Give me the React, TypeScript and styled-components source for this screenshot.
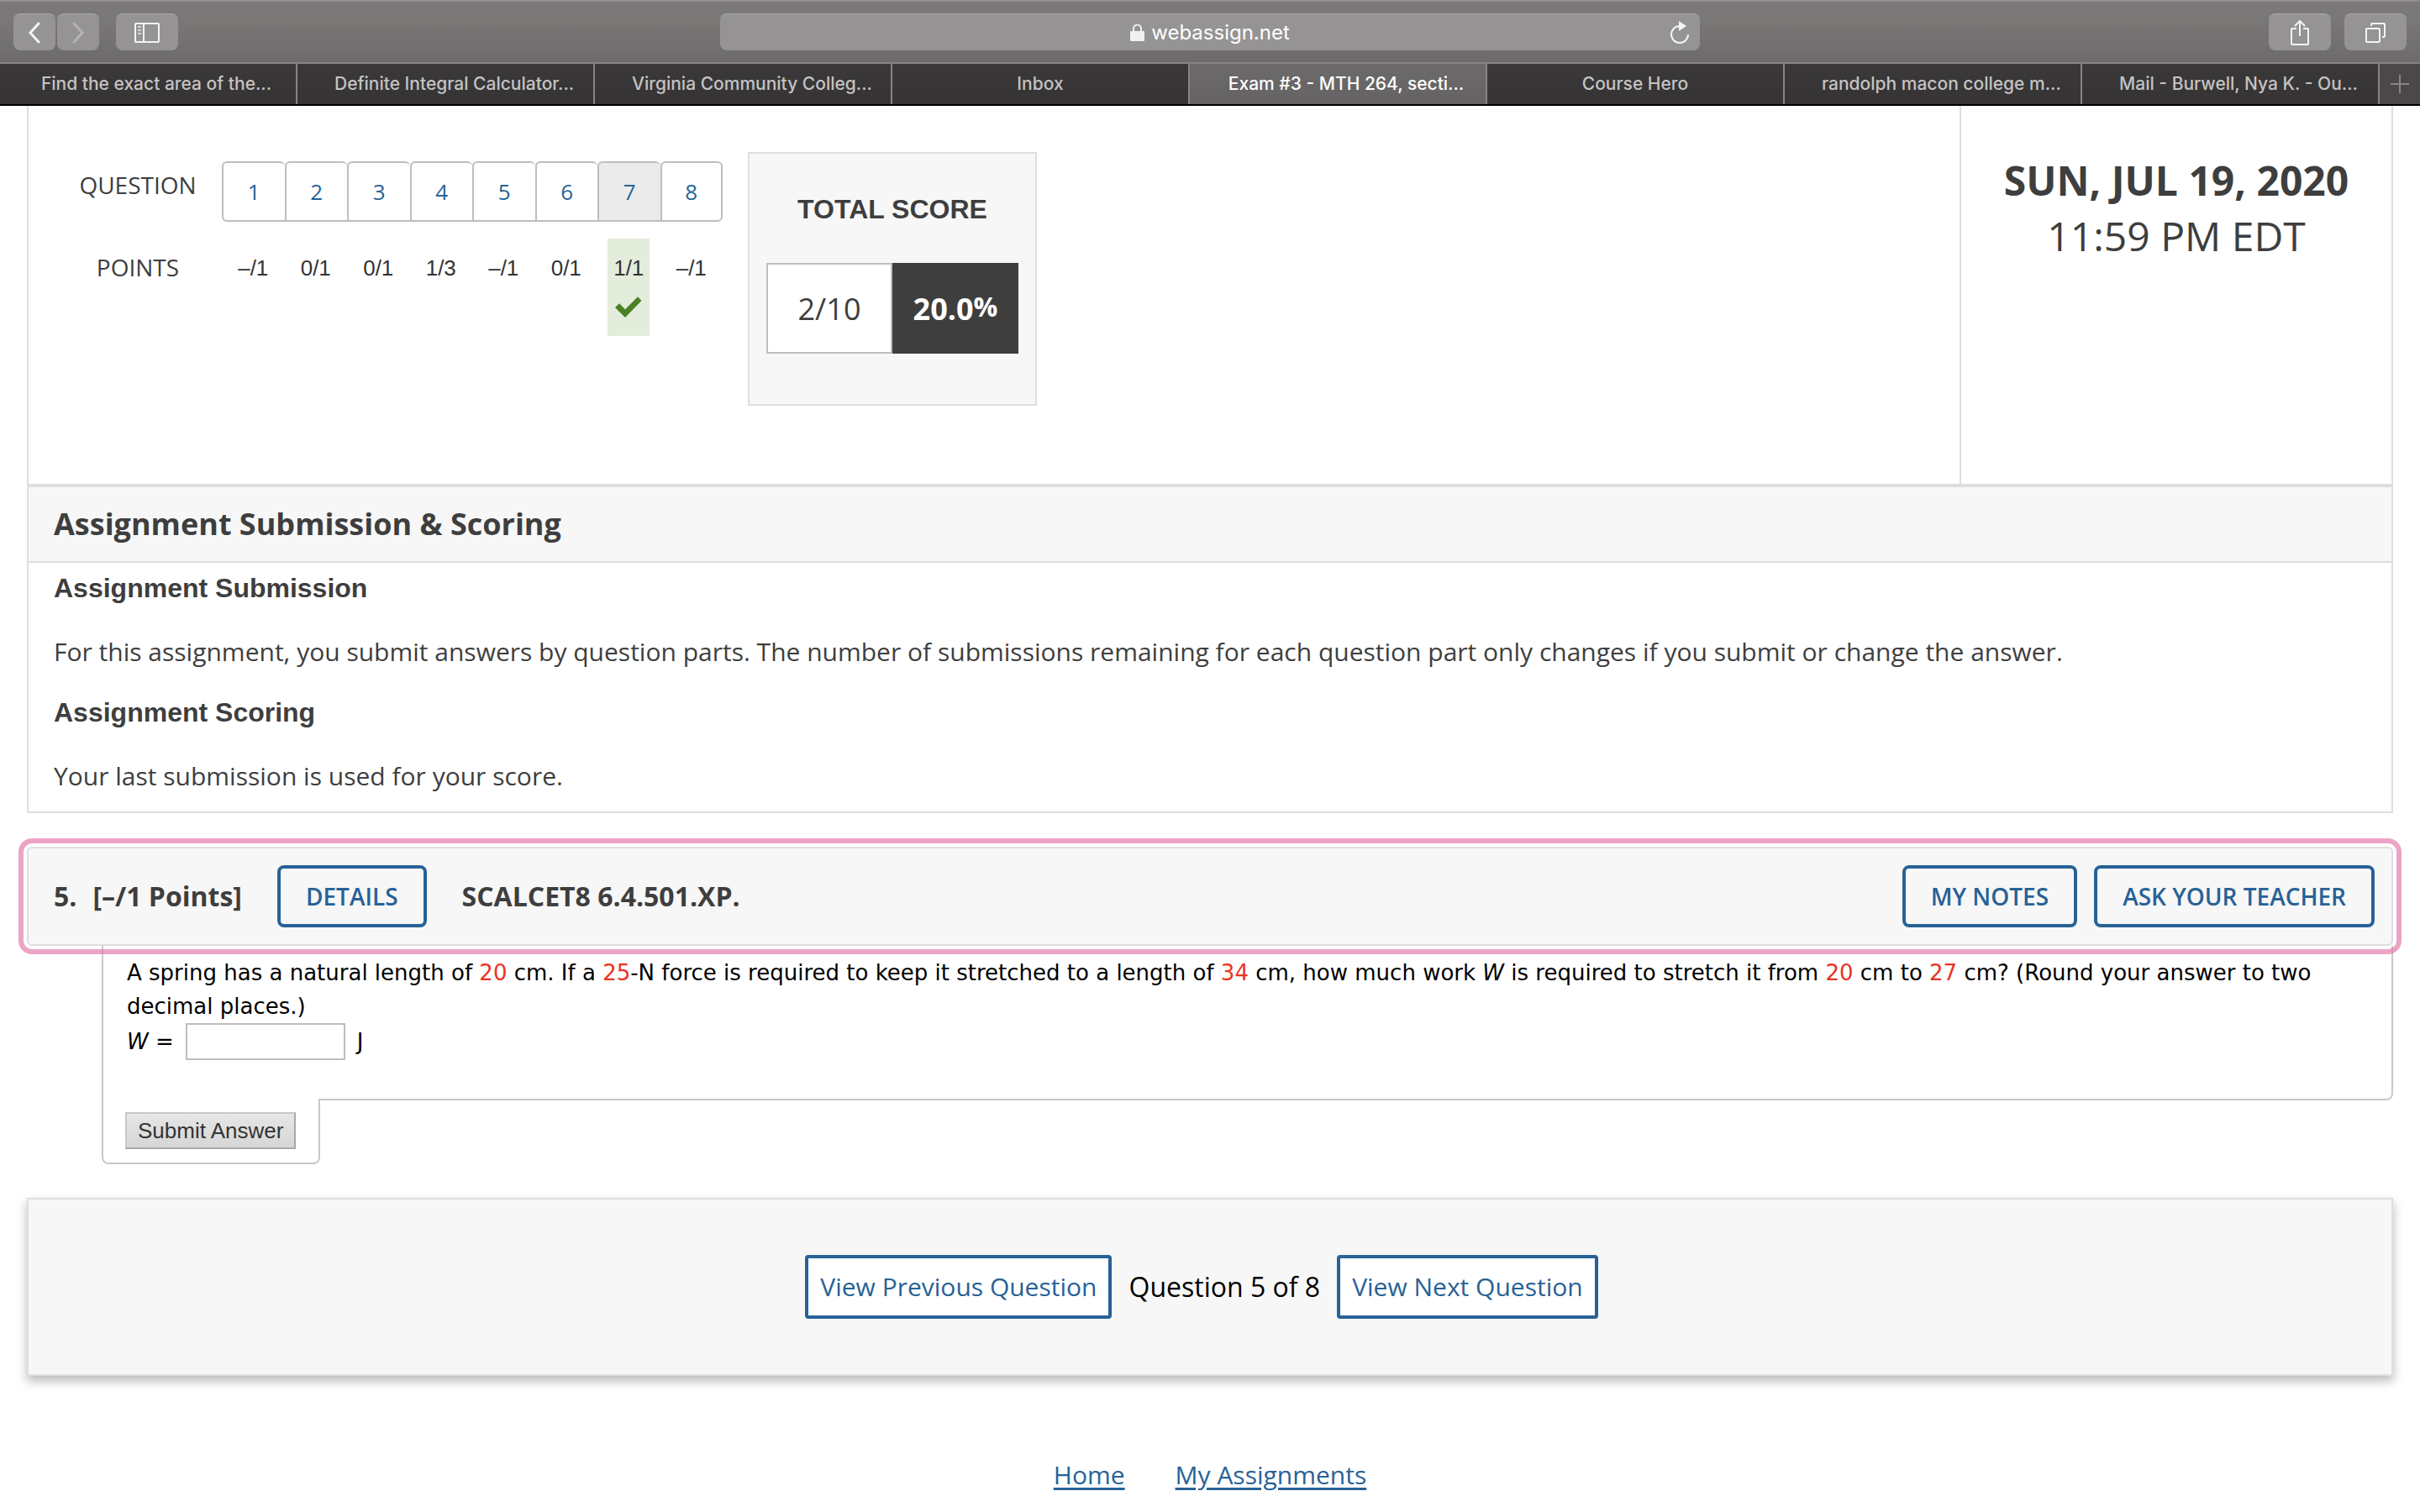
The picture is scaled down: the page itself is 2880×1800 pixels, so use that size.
import React from "react";
import styled, { createGlobalStyle, css } from "styled-components";

const color = {
  ink: "#3e3e3e",
  blue: "#286296",
  line: "#dedede",
  edge: "#c8c8c8",
  panel: "#f7f7f7",
};

const sans = `"Open Sans", "Noto Sans", sans-serif`;
const arial = `"Liberation Sans", Arial, sans-serif`;
const verdana = `Verdana, "DejaVu Sans", sans-serif`;

const GlobalStyle = createGlobalStyle`
  *, *::before, *::after { box-sizing: border-box; }
  body { margin: 0; background: #fff; color: ${color.ink}; font-family: ${sans}; }
  h1, h2, h3, p { margin: 0; }
  button, input { font: inherit; margin: 0; }
`;

/* ---------- Browser chrome ---------- */

const Toolbar = styled.div`
  display: grid;
  grid-template-columns: 1fr minmax(0, 1166px) 1fr;
  align-items: center;
  height: 76px;
  padding: 0 16px;
  background: linear-gradient(#7b7979, #7a7876 30%, #6c6a6b);
  border-top: 2px solid #918f90;
  border-bottom: 2px solid #868485;
`;

const ToolGroup = styled.div<{ $end?: boolean }>`
  display: flex;
  justify-content: ${(p) => (p.$end ? "flex-end" : "flex-start")};
  gap: ${(p) => (p.$end ? "16px" : "2px")};
`;

const ToolButton = styled.button<{ $wide?: boolean; $apart?: boolean }>`
  display: flex;
  align-items: center;
  justify-content: center;
  width: ${(p) => (p.$wide ? "74px" : "50px")};
  height: 44px;
  padding: 0;
  margin-left: ${(p) => (p.$apart ? "18px" : "0")};
  border: 0;
  border-top: 1px solid #aaa8a9;
  border-radius: 8px;
  background: #959394;
  color: #f4f4f4;

  &:disabled { color: #b4b2b3; }
`;

const AddressBar = styled.div`
  display: grid;
  grid-template-columns: 48px 1fr 48px;
  align-items: center;
  height: 44px;
  border-top: 1px solid #aaa8a9;
  border-radius: 8px;
  background: #959394;
`;

const Address = styled.div`
  grid-column: 2;
  display: flex;
  align-items: center;
  justify-content: center;
  gap: 8px;
  color: #fff;
  font: 400 24px/32px Inter, sans-serif;
`;

const Reload = styled.button`
  display: flex;
  justify-content: center;
  padding: 0;
  border: 0;
  background: none;
  color: #f4f4f4;
`;

const TabBar = styled.nav`
  display: grid;
  grid-template-columns: repeat(8, minmax(0, 1fr)) 48px;
  height: 50px;
  background: linear-gradient(#3a3839, #353334);
  border-bottom: 2px solid #000;
`;

const Tab = styled.button<{ $active?: boolean; $cut?: boolean }>`
  padding: ${(p) => (p.$cut ? "0 24px 0 44px" : "0")};
  border: 0;
  border-right: 2px solid #868485;
  background: ${(p) => (p.$active ? "linear-gradient(#6c6a6b, #646263)" : "none")};
  color: ${(p) => (p.$active ? "#fff" : "#c4c3c3")};
  font: 500 21px/28px Inter, sans-serif;
  white-space: nowrap;
  overflow: hidden;
`;

const NewTab = styled.button`
  display: flex;
  align-items: center;
  justify-content: center;
  padding: 0;
  border: 0;
  background: #4a4849;
  color: #868485;
`;

/* ---------- Page ---------- */

const Page = styled.main`
  padding: 0 32px;
`;

const Assignment = styled.section`
  border: 2px solid ${color.line};
  border-top: 0;
`;

const Summary = styled.div`
  display: grid;
  grid-template-columns: minmax(0, 1fr) 514px;
  min-height: 454px;
  border-bottom: 4px solid ${color.line};
`;

const Scores = styled.div`
  display: flex;
  align-items: flex-start;
  gap: 30px;
  padding: 55px 0 0 30px;
`;

const Progress = styled.div`
  display: grid;
  grid-template-columns: 200px 596px;
  align-items: start;
  row-gap: 20px;
  padding-top: 11px;
`;

const RowLabel = styled.div<{ $low?: boolean }>`
  padding: ${(p) => (p.$low ? "16px" : "10px")} 0 0;
  text-align: center;
  font-size: 28px;
  line-height: 36px;
`;

const QuestionNav = styled.nav`
  display: grid;
  grid-template-columns: repeat(8, 1fr);
`;

const QuestionLink = styled.a<{ $current?: boolean }>`
  border: 2px solid #bebebe;
  border-right-width: 0;
  border-radius: 6px 6px 0 0;
  text-align: center;
  font-size: 26px;
  line-height: 68px;
  color: ${color.blue};
  text-decoration: none;
  background: ${(p) => (p.$current ? "#ebebeb" : "#fff")};

  &:first-child { border-radius: 6px 6px 0 6px; }
  &:last-child { border-right-width: 2px; border-radius: 6px 6px 6px 0; }
`;

const PointsRow = styled.div`
  display: grid;
  grid-template-columns: repeat(8, 1fr);
  justify-items: center;
  align-items: start;
`;

const Point = styled.div<{ $correct?: boolean }>`
  display: flex;
  flex-direction: column;
  align-items: center;
  gap: 16px;
  min-width: 50px;
  height: 116px;
  padding-top: 17px;
  font: 26px/36px ${arial};
  color: #333;
  background: ${(p) => (p.$correct ? "#e4eddc" : "none")};
`;

const TotalScore = styled.div`
  width: 344px;
  height: 302px;
  padding: 46px 20px 0;
  border: 2px solid ${color.line};
  background: ${color.panel};
`;

const TotalTitle = styled.h3`
  text-align: center;
  font: bold 32px/40px ${arial};
`;

const TotalCells = styled.div`
  display: grid;
  grid-template-columns: 1fr 1fr;
  margin-top: 44px;
`;

const TotalCell = styled.div<{ $dark?: boolean }>`
  height: 108px;
  border: 2px solid #bebebe;
  background: #fff;
  text-align: center;
  font-size: 36px;
  line-height: 106px;
  ${(p) =>
    p.$dark &&
    css`
      border-color: ${color.ink};
      background: ${color.ink};
      color: #fff;
      font-weight: 700;
    `}
`;

const Percent = styled.span`
  font-size: 32px;
  line-height: 32px;
  vertical-align: 4px;
`;

const Due = styled.div`
  padding-top: 56px;
  border-left: 2px solid ${color.line};
  text-align: center;
  font-size: 48px;
  line-height: 66px;
`;

const SectionTitle = styled.h2`
  padding: 20px 30px;
  border-bottom: 2px solid ${color.line};
  background: ${color.panel};
  font-size: 36px;
  line-height: 48px;
`;

const Rules = styled.div`
  padding: 10px 30px 22px;
`;

const RuleTitle = styled.h3`
  font: bold 32px/40px ${arial};
`;

const RuleText = styled.p`
  padding: 36px 0 32px;
  font-size: 30px;
  line-height: 40px;

  &:last-child { padding-bottom: 0; }
`;

const QuestionHead = styled.header`
  display: flex;
  align-items: center;
  margin-top: 40px;
  padding: 20px 20px 20px 30px;
  border: 2px solid ${color.line};
  border-radius: 6px;
  background: ${color.panel};
  outline: 6px solid rgba(226, 117, 168, 0.66);
  outline-offset: 4px;
`;

const HeadText = styled.span<{ $gap?: number }>`
  margin-left: ${(p) => p.$gap ?? 0}px;
  font-size: 32px;
  line-height: 40px;
  font-weight: 700;
`;

const Outlined = styled.button`
  height: 74px;
  padding: 0 30px;
  border: 4px solid ${color.blue};
  border-radius: 8px;
  background: none;
  color: ${color.blue};
  font-size: 28px;
  line-height: 36px;
  font-weight: 600;
`;

const DetailsButton = styled(Outlined)`
  margin-left: 42px;
`;

const HeadActions = styled.div`
  display: flex;
  gap: 20px;
  margin-left: auto;
`;

const QuestionBody = styled.form`
  display: grid;
  grid-template-columns: 260px minmax(0, 1fr);
  margin-left: 89px;
`;

const Problem = styled.div`
  grid-column: 1 / -1;
  min-height: 184px;
  padding: 12px 28px 0;
  border: 2px solid ${color.edge};
  border-top: 0;
  border-radius: 0 0 8px 0;
  color: #000;
  font: 26px/40px ${verdana};
`;

const Value = styled.span`
  color: #ea3323;
`;

const AnswerLine = styled.div`
  display: flex;
  align-items: center;
  height: 44px;
`;

const AnswerInput = styled.input`
  width: 190px;
  height: 44px;
  margin: 0 14px;
  border: 2px solid #bebebe;
  border-radius: 0;
`;

/* Overlaps the bottom edge of the problem box, so that both read as one outline. */
const SubmitArea = styled.div`
  height: 78px;
  margin-top: -2px;
  padding: 16px 0 0 26px;
  border: 2px solid ${color.edge};
  border-top: 0;
  border-radius: 0 0 8px 8px;
  background: #fff;
`;

const SubmitButton = styled.button`
  height: 44px;
  padding: 0 13px;
  border: 2px solid;
  border-color: #c8c8c8 #a8a8a8 #a8a8a8 #c8c8c8;
  background: linear-gradient(#e6e6e6, #d6d6d6);
  color: #333;
  font: 26px/36px ${arial};
`;

const Pager = styled.nav`
  display: flex;
  align-items: center;
  justify-content: center;
  gap: 20px;
  height: 212px;
  margin-top: 40px;
  padding-right: 20px;
  border: 2px solid ${color.line};
  background: ${color.panel};
  box-shadow: 0 6px 12px rgba(0, 0, 0, 0.28);
  color: #000;
  font-size: 32px;
  line-height: 40px;
`;

const PagerButton = styled.button`
  height: 76px;
  padding: 0 14px;
  border: 4px solid ${color.blue};
  border-radius: 4px;
  background: #fff;
  color: ${color.blue};
  font-size: 30px;
  line-height: 40px;
`;

const Footer = styled.footer`
  display: flex;
  justify-content: center;
  gap: 60px;
  padding: 96px 0 20px;
`;

const FooterLink = styled.a`
  color: ${color.blue};
  font-size: 30px;
  line-height: 44px;
  text-underline-offset: 4px;
`;

/* ---------- Icons ---------- */

const BackIcon = () => (
  <svg width="14" height="26" viewBox="0 0 14 26" fill="none" stroke="currentColor" strokeWidth="3" strokeLinecap="round">
    <path d="M12 2 2 13 12 24" />
  </svg>
);
const ForwardIcon = () => (
  <svg width="14" height="26" viewBox="0 0 14 26" fill="none" stroke="currentColor" strokeWidth="3" strokeLinecap="round">
    <path d="M2 2 12 13 2 24" />
  </svg>
);
const SidebarIcon = () => (
  <svg width="30" height="24" viewBox="0 0 30 24" fill="none" stroke="currentColor" strokeWidth="2">
    <rect x="1" y="1" width="28" height="22" rx="1" />
    <path d="M11 1V23" />
    <path d="M4 5h4M4 9h4M4 13h4" opacity="0.7" />
  </svg>
);
const LockIcon = () => (
  <svg width="17" height="22" viewBox="0 0 17 22">
    <path d="M4 10V6a4.500 4.500 0 0 1 9 0v4" fill="none" stroke="#f0f0f0" strokeWidth="2" />
    <rect x="0" y="9" width="17" height="12" rx="1" fill="#f0f0f0" />
  </svg>
);
const ReloadIcon = () => (
  <svg width="24" height="28" viewBox="0 0 24 28">
    <path d="M12 6A10 10 0 1 0 22 16" fill="none" stroke="currentColor" strokeWidth="2" />
    <path d="M11 0 20 6 11 12Z" fill="currentColor" />
  </svg>
);
const ShareIcon = () => (
  <svg width="24" height="32" viewBox="0 0 24 32" fill="none" stroke="currentColor" strokeWidth="2">
    <path d="M8 11H3Q2 11 2 12V29Q2 30 3 30H21Q22 30 22 29V12Q22 11 21 11H16M12 20V2M6 8l6-6 6 6" />
  </svg>
);
const TabsIcon = () => (
  <svg width="24" height="24" viewBox="0 0 24 24" fill="none" stroke="currentColor" strokeWidth="2">
    <rect x="1" y="7" width="16" height="16" rx="1" />
    <path d="M7 4V2Q7 1 8 1H22Q23 1 23 2V16Q23 17 22 17H20" />
  </svg>
);
const PlusIcon = () => (
  <svg width="22" height="22" viewBox="0 0 22 22" stroke="currentColor" strokeWidth="2">
    <path d="M11 0V22M0 11H22" />
  </svg>
);
const CheckIcon = () => (
  <svg width="32" height="26" viewBox="0 0 32 26">
    <path d="M0 13 5 8.300 12 15.300 27 0.300 31.500 5 12 25Z" fill="#4b8122" />
  </svg>
);

/* ---------- Data ---------- */

const tabs = [
  { label: "Find the exact area of the...", cut: true },
  { label: "Definite Integral Calculator...", cut: true },
  { label: "Virginia Community Colleg...", cut: true },
  { label: "Inbox" },
  { label: "Exam #3 - MTH 264, secti...", cut: true, active: true },
  { label: "Course Hero" },
  { label: "randolph macon college m...", cut: true },
  { label: "Mail - Burwell, Nya K. - Ou...", cut: true },
];

const points = ["–/1", "0/1", "0/1", "1/3", "–/1", "0/1", "1/1", "–/1"];
const current = 6;

export default function App() {
  return (
    <>
      <GlobalStyle />
      <Toolbar>
        <ToolGroup>
          <ToolButton aria-label="Back"><BackIcon /></ToolButton>
          <ToolButton aria-label="Forward" disabled><ForwardIcon /></ToolButton>
          <ToolButton aria-label="Sidebar" $wide $apart><SidebarIcon /></ToolButton>
        </ToolGroup>
        <AddressBar>
          <Address><LockIcon />webassign.net</Address>
          <Reload aria-label="Reload"><ReloadIcon /></Reload>
        </AddressBar>
        <ToolGroup $end>
          <ToolButton aria-label="Share" $wide><ShareIcon /></ToolButton>
          <ToolButton aria-label="Show tabs" $wide><TabsIcon /></ToolButton>
        </ToolGroup>
      </Toolbar>
      <TabBar>
        {tabs.map((t) => (
          <Tab key={t.label} $cut={t.cut} $active={t.active}>{t.label}</Tab>
        ))}
        <NewTab aria-label="New tab"><PlusIcon /></NewTab>
      </TabBar>

      <Page>
        <Assignment>
          <Summary>
            <Scores>
              <Progress>
                <RowLabel>QUESTION</RowLabel>
                <QuestionNav>
                  {points.map((_, i) => (
                    <QuestionLink key={i} href="#" $current={i === current}>{i + 1}</QuestionLink>
                  ))}
                </QuestionNav>
                <RowLabel $low>POINTS</RowLabel>
                <PointsRow>
                  {points.map((p, i) => (
                    <Point key={i} $correct={i === current}>
                      {p}
                      {i === current && <CheckIcon />}
                    </Point>
                  ))}
                </PointsRow>
              </Progress>
              <TotalScore>
                <TotalTitle>TOTAL SCORE</TotalTitle>
                <TotalCells>
                  <TotalCell>2/10</TotalCell>
                  <TotalCell $dark>20.0<Percent>%</Percent></TotalCell>
                </TotalCells>
              </TotalScore>
            </Scores>
            <Due>
              <strong>SUN, JUL 19, 2020</strong>
              <div>11:59 PM EDT</div>
            </Due>
          </Summary>
          <SectionTitle>Assignment Submission &amp; Scoring</SectionTitle>
          <Rules>
            <RuleTitle>Assignment Submission</RuleTitle>
            <RuleText>
              For this assignment, you submit answers by question parts. The number of submissions
              remaining for each question part only changes if you submit or change the answer.
            </RuleText>
            <RuleTitle>Assignment Scoring</RuleTitle>
            <RuleText>Your last submission is used for your score.</RuleText>
          </Rules>
        </Assignment>

        <QuestionHead>
          <HeadText>5.</HeadText>
          <HeadText $gap={19}>[–/1 Points]</HeadText>
          <DetailsButton>DETAILS</DetailsButton>
          <HeadText $gap={42}>SCALCET8 6.4.501.XP.</HeadText>
          <HeadActions>
            <Outlined>MY NOTES</Outlined>
            <Outlined>ASK YOUR TEACHER</Outlined>
          </HeadActions>
        </QuestionHead>

        <QuestionBody onSubmit={(e) => e.preventDefault()}>
          <Problem>
            <p>
              A spring has a natural length of <Value>20</Value> cm. If a <Value>25</Value>-N force
              is required to keep it stretched to a length of <Value>34</Value> cm, how much work{" "}
              <i>W</i> is required to stretch it from <Value>20</Value> cm to <Value>27</Value> cm?
              (Round your answer to two decimal places.)
            </p>
            <AnswerLine>
              <label htmlFor="work"><i>W</i> =</label>
              <AnswerInput id="work" type="text" />
              <span>J</span>
            </AnswerLine>
          </Problem>
          <SubmitArea>
            <SubmitButton type="submit">Submit Answer</SubmitButton>
          </SubmitArea>
        </QuestionBody>

        <Pager>
          <PagerButton>View Previous Question</PagerButton>
          <span>Question 5 of 8</span>
          <PagerButton>View Next Question</PagerButton>
        </Pager>

        <Footer>
          <FooterLink href="#">Home</FooterLink>
          <FooterLink href="#">My Assignments</FooterLink>
        </Footer>
      </Page>
    </>
  );
}
